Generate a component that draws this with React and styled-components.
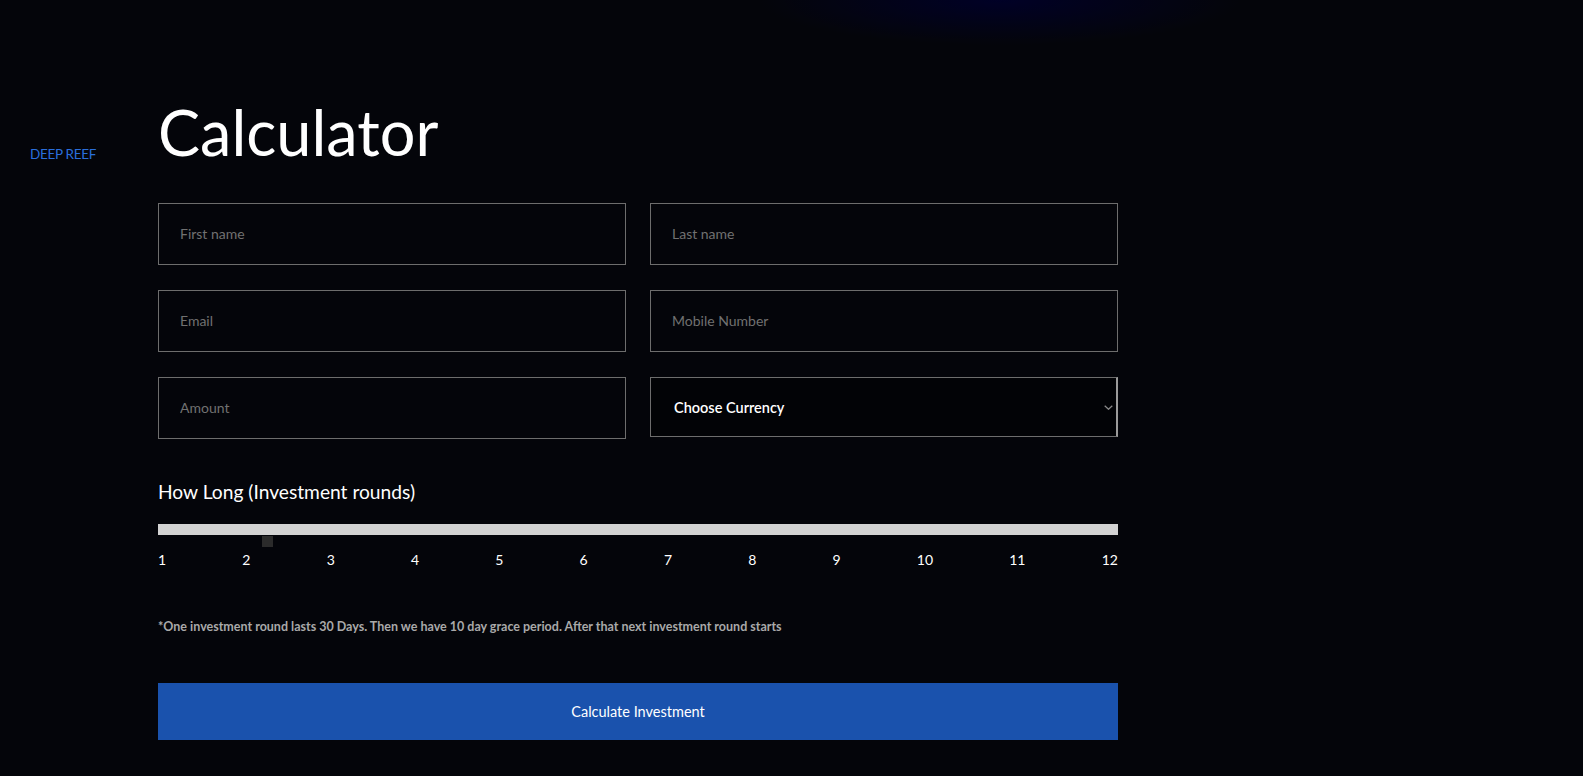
import React from 'react';
import styled, { createGlobalStyle } from 'styled-components';

const GlobalStyle = createGlobalStyle`
  html, body {
    margin: 0;
    padding: 0;
  }
  body {
    background:
      radial-gradient(ellipse 240px 45px at 1000px 0px, rgba(0, 0, 40, 0.95), rgba(0, 0, 40, 0) 100%),
      #04050a;
    font-family: Lato, "Open Sans", sans-serif;
    color: #fff;
    min-height: 776px;
  }
`;

const Page = styled.div`
  display: flex;
  min-height: 776px;
`;

const Sidebar = styled.aside`
  width: 128px;
  padding: 143px 0 0 30px;
  flex-shrink: 0;
`;

const Brand = styled.a`
  font-size: 13.5px;
  line-height: 17px;
  color: #2a6edb;
  text-decoration: none;
  text-transform: uppercase;
  letter-spacing: -0.3px;
`;

const Main = styled.main`
  width: 960px;
  padding-top: 93px;
  padding-bottom: 36px;
`;

const Title = styled.h1`
  margin: 0;
  font-size: 63px;
  line-height: 77px;
  font-weight: 400;
  color: #fff;
`;

const FormGrid = styled.div`
  margin-top: 33px;
  display: grid;
  grid-template-columns: 468px 468px;
  column-gap: 24px;
  row-gap: 25px;
`;

const Field = styled.input`
  box-sizing: border-box;
  height: 62px;
  width: 100%;
  padding: 0 21px 2px;
  background: transparent;
  border: 1px solid #6d6d6d;
  border-radius: 0;
  color: #fff;
  font-family: Lato, sans-serif;
  font-size: 14px;
  outline: none;
  &::placeholder {
    color: #717171;
  }
`;

const SelectWrap = styled.div`
  position: relative;
  height: 62px;
`;

const Select = styled.select`
  box-sizing: border-box;
  appearance: none;
  width: 100%;
  height: 60px;
  padding: 0 23px;
  background: #020306;
  border: 1px solid #6d6d6d;
  border-right: 2px solid #9a9a9a;
  border-radius: 0;
  color: #fff;
  font-family: Lato, sans-serif;
  font-size: 14.5px;
  font-weight: 600;
  outline: none;
`;

const Chevron = styled.svg`
  position: absolute;
  right: 5px;
  top: 28px;
  pointer-events: none;
`;

const Label = styled.div`
  margin-top: 41px;
  font-size: 19.2px;
  line-height: 24px;
  color: #fff;
`;

const Track = styled.div`
  position: relative;
  margin-top: 20px;
  height: 11px;
  background: #d3d3d3;
`;

const Thumb = styled.span`
  position: absolute;
  top: 12px;
  width: 11px;
  height: 11px;
  background: #2b2b2b;
`;

const Ticks = styled.div`
  margin-top: 16px;
  display: flex;
  justify-content: space-between;
  font-size: 14px;
  line-height: 17px;
  color: #fff;
`;

const Note = styled.p`
  margin: 51px 0 0;
  font-size: 12.5px;
  line-height: 16px;
  font-weight: 700;
  color: #a9a9a9;
`;

const Button = styled.button`
  display: block;
  margin-top: 48px;
  width: 100%;
  height: 57px;
  border: none;
  border-radius: 0;
  background: #1a52ad;
  color: #fff;
  font-family: Lato, sans-serif;
  font-size: 14.5px;
  cursor: pointer;
`;

const rounds = [1, 2, 3, 4, 5, 6, 7, 8, 9, 10, 11, 12];
const value = 2.2;

export default function App() {
  const pct = (value - 1) / (rounds.length - 1);
  return (
    <>
      <GlobalStyle />
      <Page>
        <Sidebar>
          <Brand href="#">Deep Reef</Brand>
        </Sidebar>
        <Main>
          <Title>Calculator</Title>
          <FormGrid>
            <Field placeholder="First name" />
            <Field placeholder="Last name" />
            <Field placeholder="Email" />
            <Field placeholder="Mobile Number" />
            <Field placeholder="Amount" />
            <SelectWrap>
              <Select defaultValue="">
                <option value="">Choose Currency</option>
                <option value="usd">USD</option>
                <option value="eur">EUR</option>
              </Select>
              <Chevron width="9" height="5" viewBox="0 0 9 5">
                <path d="M0.7 0.7 L4.5 4.3 L8.3 0.7" fill="none" stroke="#8a8a8a" strokeWidth="1.2" />
              </Chevron>
            </SelectWrap>
          </FormGrid>
          <Label>How Long (Investment rounds)</Label>
          <Track>
            <Thumb style={{ left: `calc(${pct * 100}% - ${pct * 11}px)` }} />
          </Track>
          <Ticks>
            {rounds.map((r) => (
              <span key={r}>{r}</span>
            ))}
          </Ticks>
          <Note>
            *One investment round lasts 30 Days. Then we have 10 day grace period. After that next investment round starts
          </Note>
          <Button>Calculate Investment</Button>
        </Main>
      </Page>
    </>
  );
}
